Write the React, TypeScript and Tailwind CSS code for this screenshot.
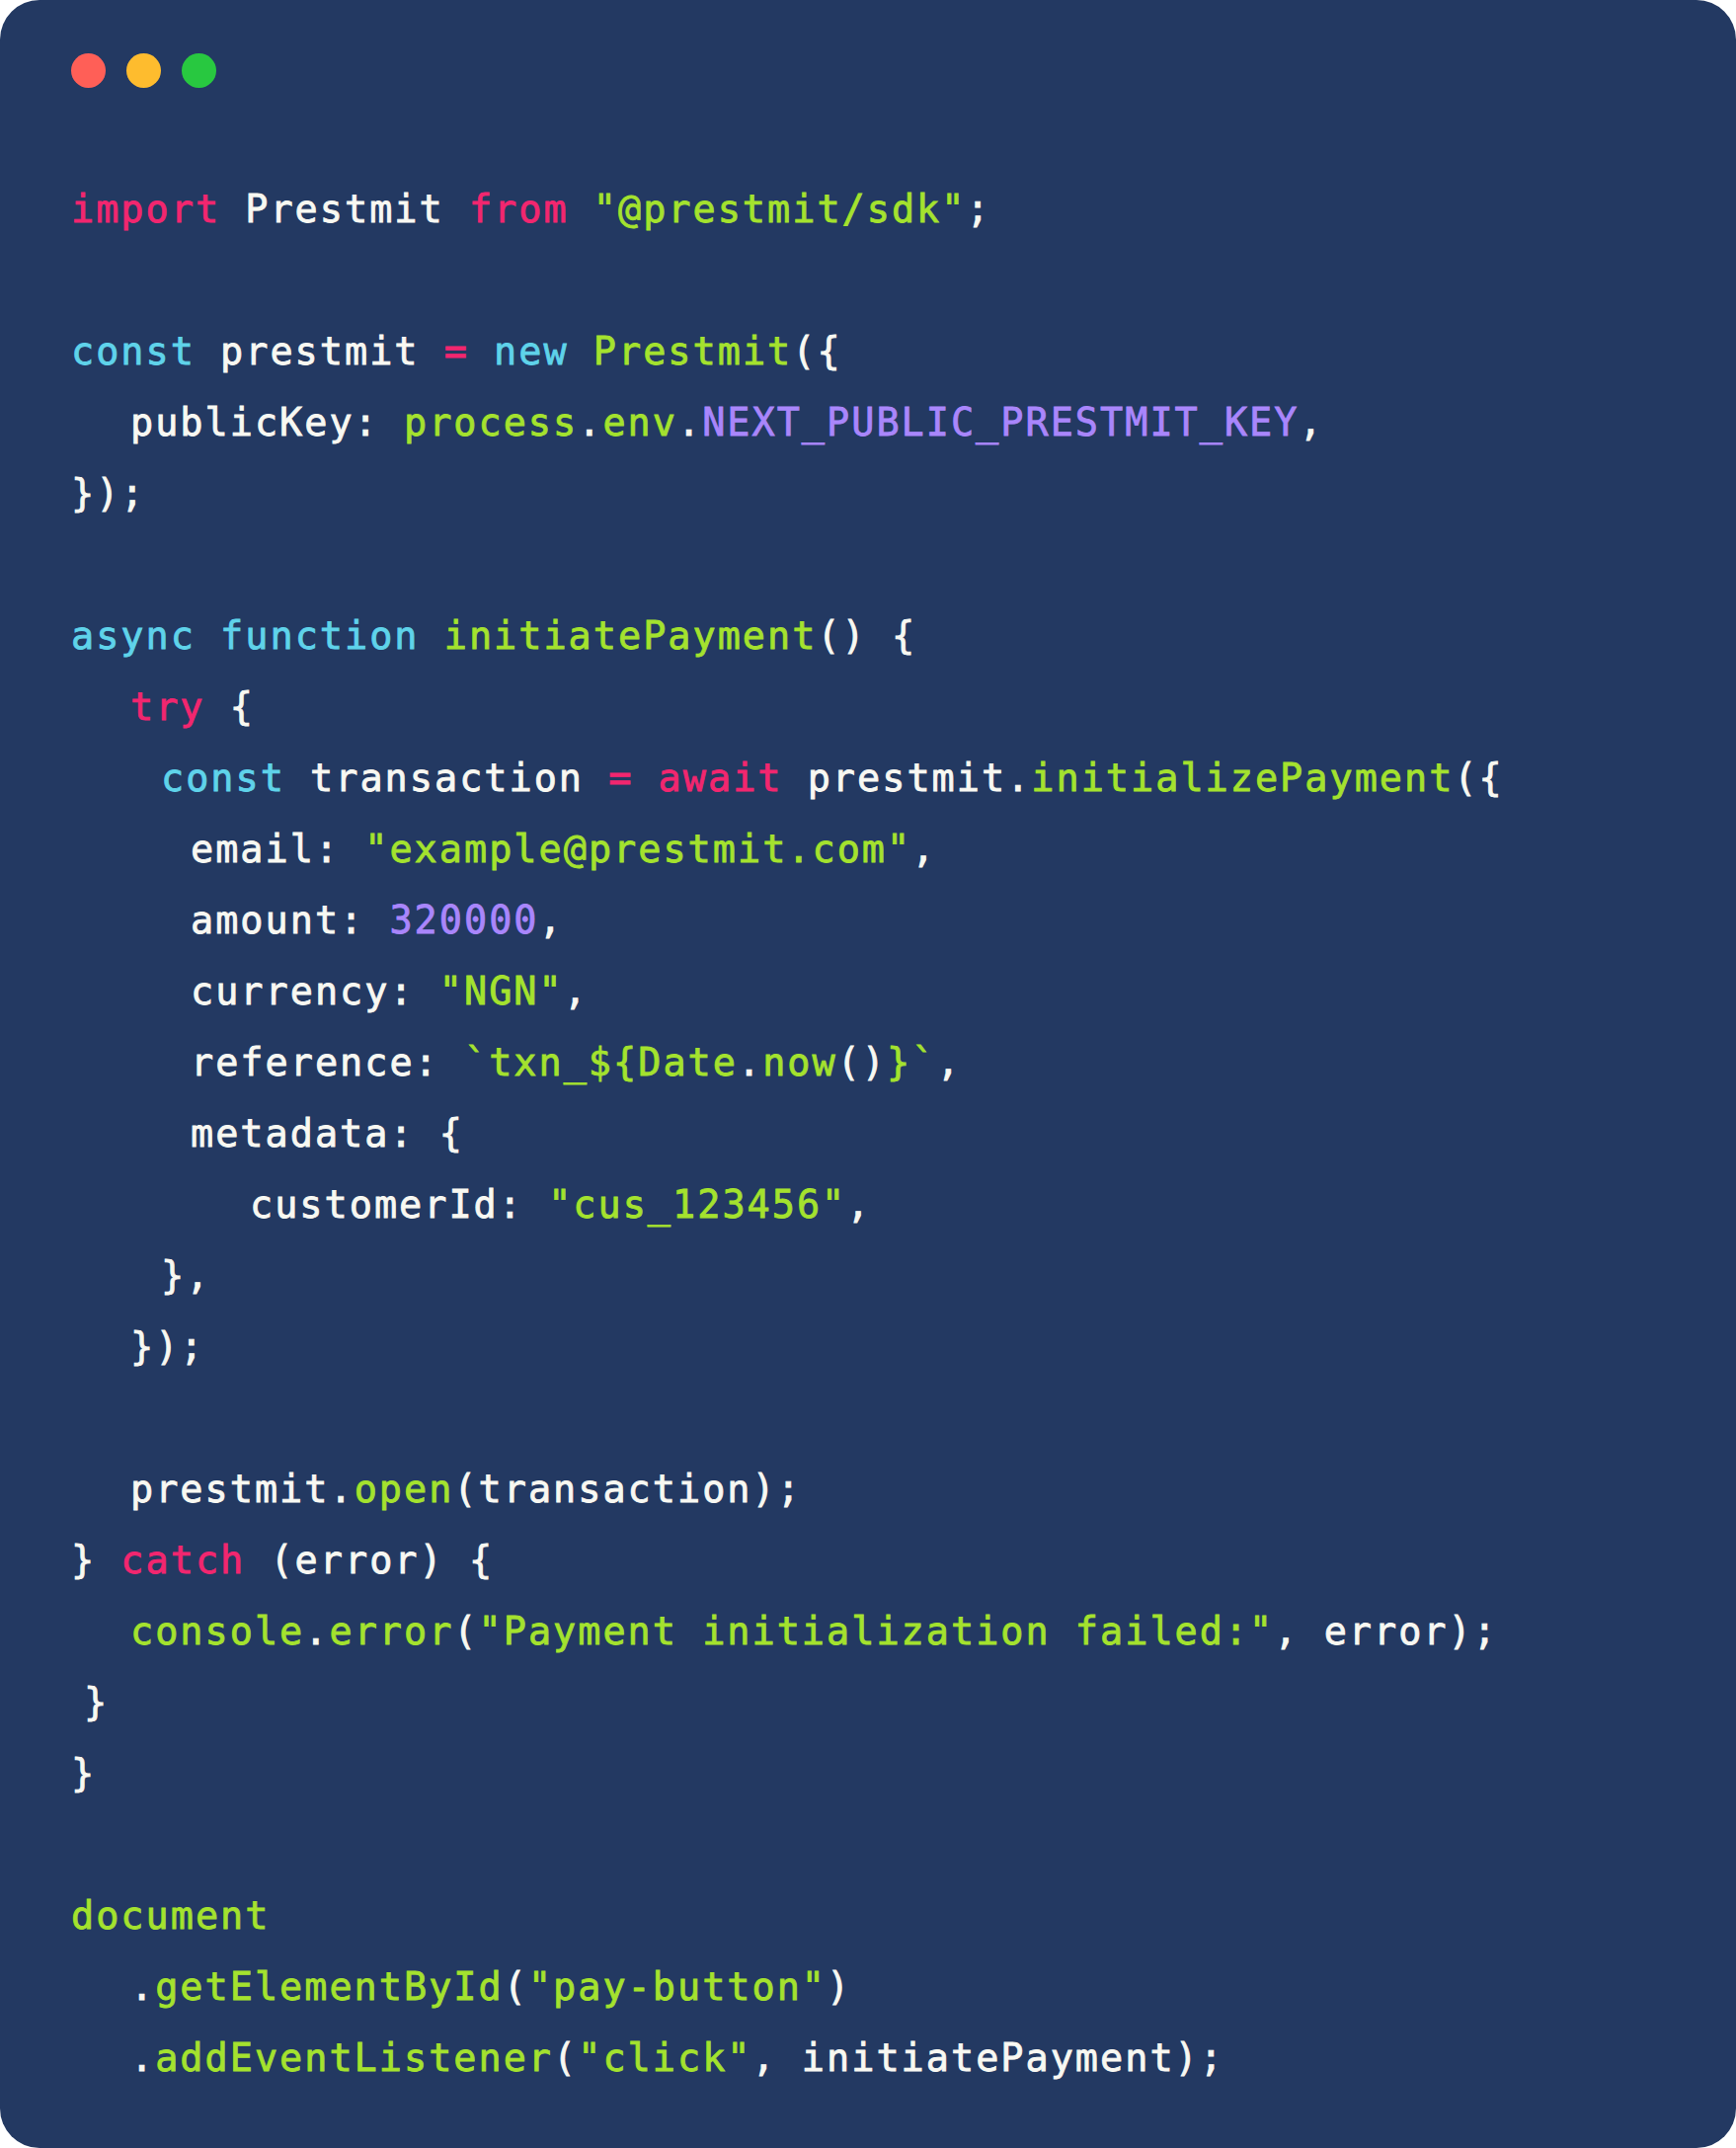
import React from "react";

type Tok = [string, string];

const W = "text-[#f8f8f2]";
const P = "text-[#f2266f]";
const C = "text-[#5fd3ea]";
const G = "text-[#a4e22e]";
const V = "text-[#a986fb]";

type Line = { indent: string; toks: Tok[] };

const lines: Line[] = [
  { indent: "", toks: [[P, "import"], [W, " Prestmit "], [P, "from"], [W, " "], [G, "\"@prestmit/sdk\""], [W, ";"]] },
  { indent: "", toks: [] },
  { indent: "", toks: [[C, "const"], [W, " prestmit "], [P, "="], [W, " "], [C, "new"], [W, " "], [G, "Prestmit"], [W, "({"]] },
  { indent: "ml-[60px]", toks: [[W, "publicKey: "], [G, "process"], [W, "."], [G, "env"], [W, "."], [V, "NEXT_PUBLIC_PRESTMIT_KEY"], [W, ","]] },
  { indent: "", toks: [[W, "});"]] },
  { indent: "", toks: [] },
  { indent: "", toks: [[C, "async"], [W, " "], [C, "function"], [W, " "], [G, "initiatePayment"], [W, "() {"]] },
  { indent: "ml-[60px]", toks: [[P, "try"], [W, " {"]] },
  { indent: "ml-[91px]", toks: [[C, "const"], [W, " transaction "], [P, "="], [W, " "], [P, "await"], [W, " prestmit."], [G, "initializePayment"], [W, "({"]] },
  { indent: "ml-[121px]", toks: [[W, "email: "], [G, "\"example@prestmit.com\""], [W, ","]] },
  { indent: "ml-[121px]", toks: [[W, "amount: "], [V, "320000"], [W, ","]] },
  { indent: "ml-[121px]", toks: [[W, "currency: "], [G, "\"NGN\""], [W, ","]] },
  { indent: "ml-[121px]", toks: [[W, "reference: "], [G, "`txn_${Date"], [W, "."], [G, "now"], [W, "()"], [G, "}`"], [W, ","]] },
  { indent: "ml-[121px]", toks: [[W, "metadata: {"]] },
  { indent: "ml-[181px]", toks: [[W, "customerId: "], [G, "\"cus_123456\""], [W, ","]] },
  { indent: "ml-[91px]", toks: [[W, "},"]] },
  { indent: "ml-[60px]", toks: [[W, "});"]] },
  { indent: "", toks: [] },
  { indent: "ml-[60px]", toks: [[W, "prestmit."], [G, "open"], [W, "(transaction);"]] },
  { indent: "", toks: [[W, "} "], [P, "catch"], [W, " (error) {"]] },
  { indent: "ml-[60px]", toks: [[G, "console"], [W, "."], [G, "error"], [W, "("], [G, "\"Payment initialization failed:\""], [W, ", error);"]] },
  { indent: "ml-[13px]", toks: [[W, "}"]] },
  { indent: "", toks: [[W, "}"]] },
  { indent: "", toks: [] },
  { indent: "", toks: [[G, "document"]] },
  { indent: "ml-[60px]", toks: [[W, "."], [G, "getElementById"], [W, "("], [G, "\"pay-button\""], [W, ")"]] },
  { indent: "ml-[60px]", toks: [[W, "."], [G, "addEventListener"], [W, "("], [G, "\"click\""], [W, ", initiatePayment);"]] },
];

export default function App() {
  return (
    <div className="w-[1758px] h-[2175px] bg-white">
      <div className="w-full h-full rounded-[40px] bg-[#233962] pt-[54px] pl-[72px] flex flex-col">
        <div className="flex gap-[21px]">
          <div className="w-[35px] h-[35px] rounded-full bg-[#ff5f57]" />
          <div className="w-[35px] h-[35px] rounded-full bg-[#febc2e]" />
          <div className="w-[35px] h-[35px] rounded-full bg-[#28c840]" />
        </div>
        <div
          className="mt-[87px] flex flex-col text-[38.5px] leading-[72px] tracking-[2px] whitespace-pre [-webkit-text-stroke:0.8px_currentColor]"
          style={{ fontFamily: '"DejaVu Sans Mono", "Liberation Mono", monospace' }}
        >
          {lines.map((l, i) => (
            <div key={i} className={`h-[72px] ${l.indent}`}>
              {l.toks.map((t, j) => (
                <span key={j} className={t[0]}>
                  {t[1]}
                </span>
              ))}
            </div>
          ))}
        </div>
      </div>
    </div>
  );
}
